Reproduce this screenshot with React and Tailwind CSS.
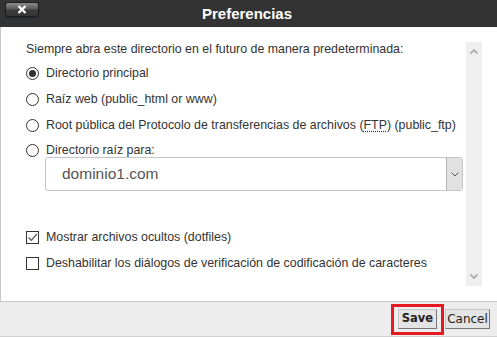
import React from "react";

function Radio({ checked }) {
  return (
    <span className="w-[13px] h-[13px] rounded-full border border-[#333] bg-white flex items-center justify-center shrink-0">
      {checked && <span className="w-[7px] h-[7px] rounded-full bg-[#333]" />}
    </span>
  );
}

function Check({ checked }) {
  return (
    <span className="w-[13px] h-[13px] border border-[#333] bg-white flex items-center justify-center shrink-0">
      {checked && (
        <svg width="11" height="11" viewBox="0 0 11 11">
          <path d="M1.5 5.5 L4.3 8.3 L9.8 2" fill="none" stroke="#555" strokeWidth="1.2" />
        </svg>
      )}
    </span>
  );
}

export default function App() {
  return (
    <div className="w-[497px] h-[337px] flex flex-col bg-white overflow-hidden font-['Liberation_Sans',Arial,sans-serif] text-[12.4px] text-[#333] whitespace-nowrap">
      <div className="relative h-[27px] bg-[#333] flex items-center justify-center shrink-0">
        <button className="absolute left-[5px] top-[2px] w-[34px] h-[15px] rounded-[3px] border border-[#1e1e1e] bg-[linear-gradient(#8c8c8c,#5a5a5a_45%,#3b3b3b_55%,#353535)] shadow-[0_1px_1px_#1c2733] flex items-center justify-center">
          <svg width="10" height="9" viewBox="0 0 10 9">
            <path d="M1.5 1 L8.5 8 M8.5 1 L1.5 8" stroke="#fff" strokeWidth="2.4" />
          </svg>
        </button>
        <span className="text-white font-bold text-[15px] leading-none ml-[-3px] mt-[-1px]">Preferencias</span>
      </div>

      <div className="flex-1 flex border-l border-[#c8c8c8] pl-[25px] pr-[15px] pt-[14px]">
        <div className="flex-1 flex flex-col">
          <div className="h-[16px] leading-[16px]">
            Siempre abra este directorio en el futuro de manera predeterminada:
          </div>
          <label className="mt-[8px] h-[16px] flex items-center gap-[7px]">
            <Radio checked />
            <span>Directorio principal</span>
          </label>
          <label className="mt-[10px] h-[16px] flex items-center gap-[7px]">
            <Radio />
            <span>Raíz web (public_html or www)</span>
          </label>
          <label className="mt-[10px] h-[16px] flex items-center gap-[7px]">
            <Radio />
            <span>
              Root pública del Protocolo de transferencias de archivos (
              <abbr className="underline decoration-dotted underline-offset-2">FTP</abbr>
              ) (public_ftp)
            </span>
          </label>
          <label className="mt-[10px] h-[14px] flex items-center gap-[7px]">
            <Radio />
            <span>Directorio raíz para:</span>
          </label>
          <div className="ml-[19px] mr-[3px] h-[34px] border border-[#c4c4c4] rounded-[3px] flex items-stretch">
            <div className="flex-1 flex items-center pl-[16px] text-[15.5px] text-[#555]">dominio1.com</div>
            <div className="w-[16px] bg-[#e1e1e1] border-l border-[#b5b5b5] flex items-center justify-center">
              <svg width="8" height="5" viewBox="0 0 8 5">
                <path d="M0.5 0.5 L4 4 L7.5 0.5" fill="none" stroke="#555" strokeWidth="1" />
              </svg>
            </div>
          </div>
          <label className="mt-[38px] h-[16px] flex items-center gap-[7px]">
            <Check checked />
            <span>Mostrar archivos ocultos (dotfiles)</span>
          </label>
          <label className="mt-[10px] h-[16px] flex items-center gap-[7px]">
            <Check />
            <span>Deshabilitar los diálogos de verificación de codificación de caracteres</span>
          </label>
        </div>
        <div className="mt-[1px] w-[16px] h-[244px] bg-[#efefef] flex flex-col justify-between items-center py-[7px]">
          <svg width="8" height="5" viewBox="0 0 8 5">
            <path d="M0.5 4.5 L4 1 L7.5 4.5" fill="none" stroke="#a8a8a8" strokeWidth="1.6" />
          </svg>
          <svg width="8" height="5" viewBox="0 0 8 5">
            <path d="M0.5 0.5 L4 4 L7.5 0.5" fill="none" stroke="#a8a8a8" strokeWidth="1.6" />
          </svg>
        </div>
      </div>

      <div className="h-[36px] shrink-0 bg-[#ededed] border-t border-[#c8c8c8] border-b border-b-[#d0d0d0] flex items-center justify-end pr-[7px] gap-[1px] font-['DejaVu_Sans',Verdana,sans-serif] text-[#222]">
        <div className="h-[31px] border-[3px] border-[#e5191f] flex items-center px-[4px]">
          <button className="h-[20px] w-[39px] bg-[#e4e4e4] border border-t-[#c8c8c8] border-l-[#c8c8c8] border-r-[#777] border-b-[#777] font-bold text-[11.5px] leading-none">
            Save
          </button>
        </div>
        <button className="h-[20px] w-[45px] bg-[#e4e4e4] border border-t-[#c8c8c8] border-l-[#c8c8c8] border-r-[#777] border-b-[#777] text-[12px] leading-none">
          Cancel
        </button>
      </div>
    </div>
  );
}
